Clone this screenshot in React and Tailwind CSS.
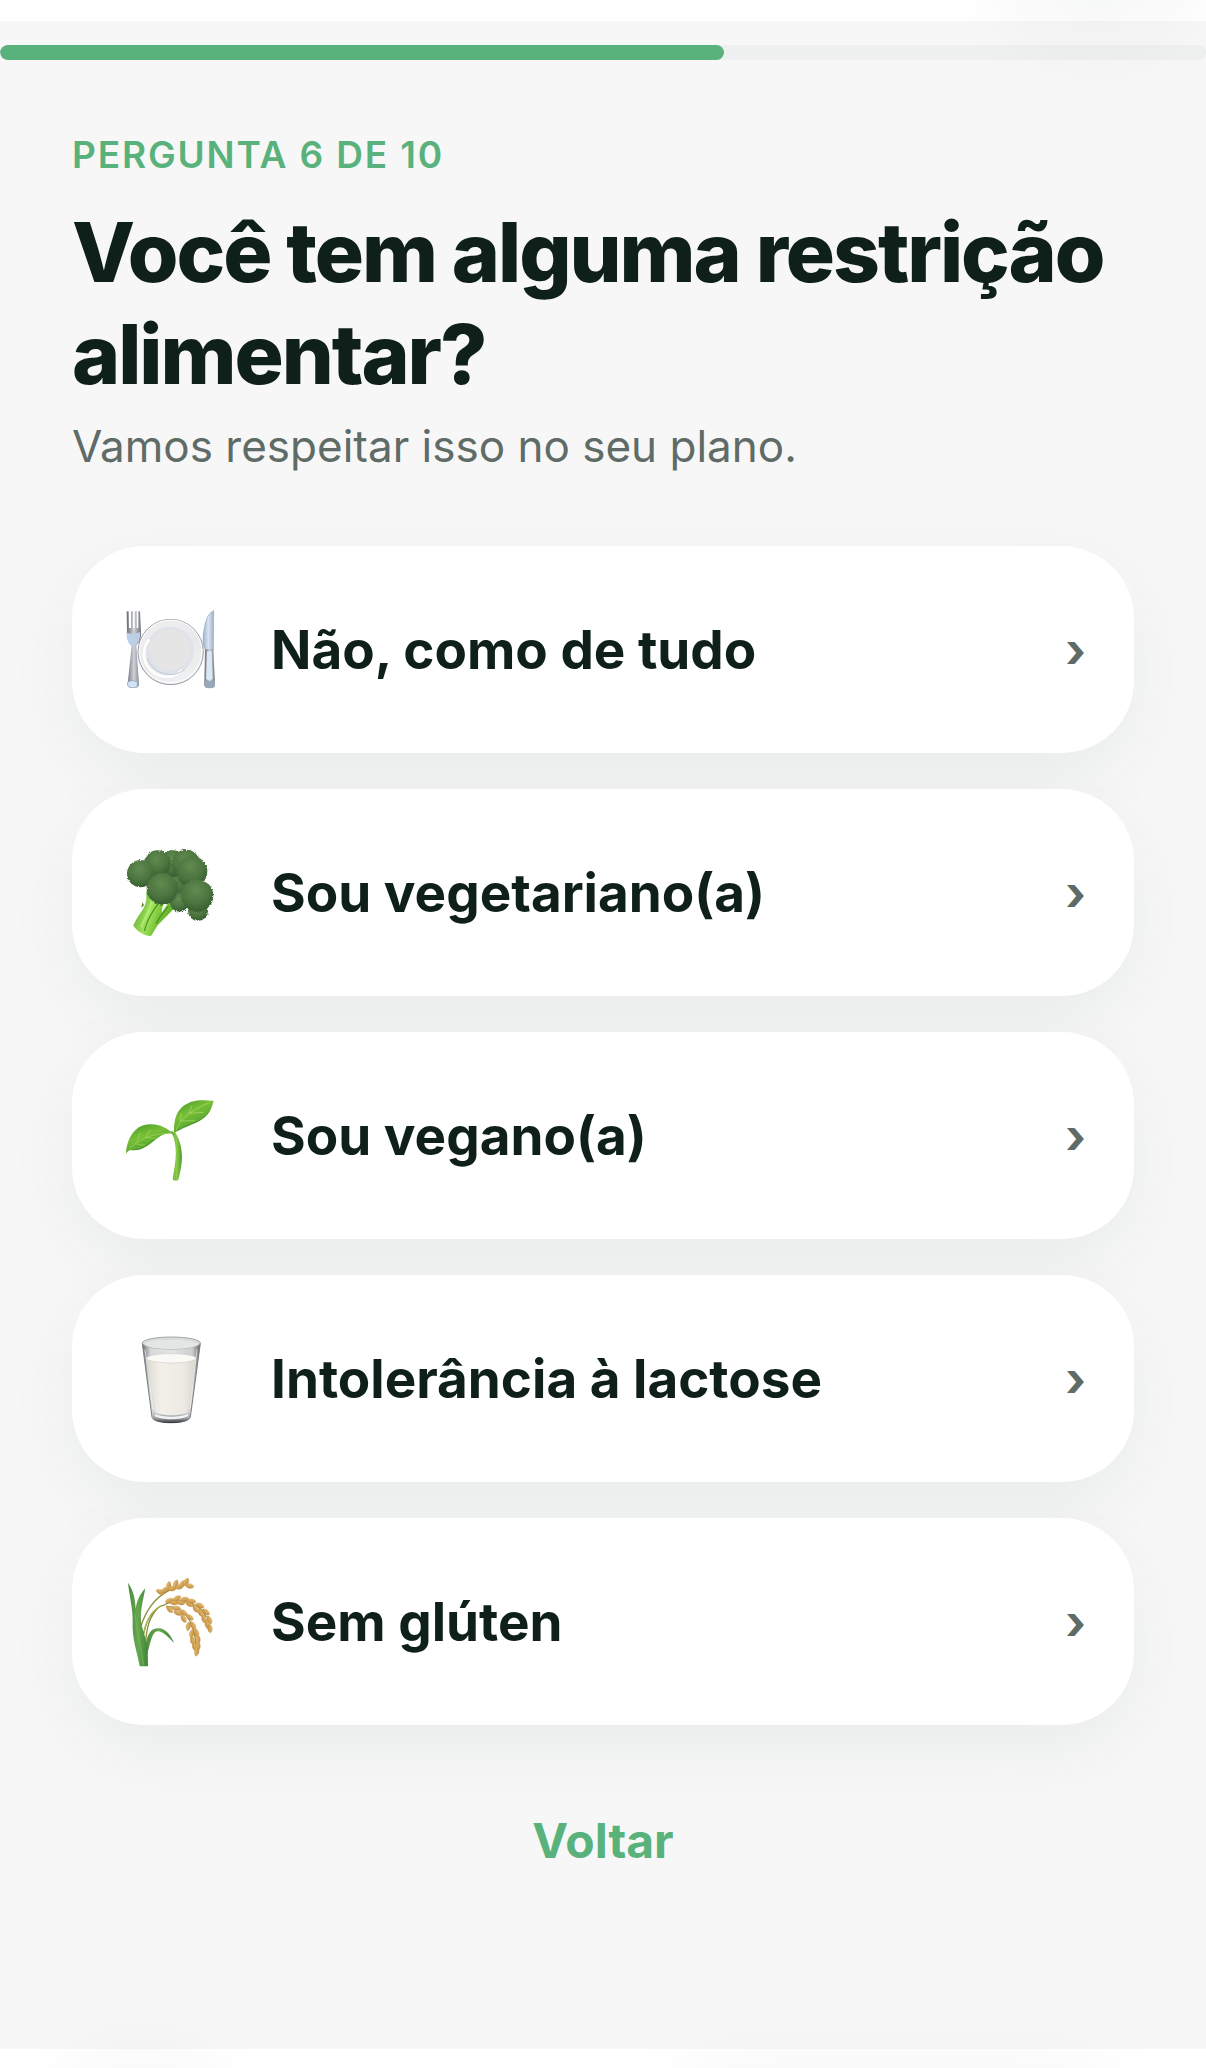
import { useState } from 'react'

const TOTAL = 10

const PlateIcon = () => (
  <svg viewBox="45 45 270 270" className="size-[90px] shrink-0" aria-hidden="true">
    <defs>
      <linearGradient id="steel" x1="0" x2="1">
        <stop offset="0" stopColor="#666b73" />
        <stop offset="0.5" stopColor="#cfd2d7" />
        <stop offset="1" stopColor="#6f747c" />
      </linearGradient>
      <linearGradient id="blade" x1="0" x2="1">
        <stop offset="0" stopColor="#9db2ca" />
        <stop offset="0.5" stopColor="#d9e4f2" />
        <stop offset="1" stopColor="#9fb3ca" />
      </linearGradient>
      <linearGradient id="rim" x1="0" y1="0" x2="0.6" y2="1">
        <stop offset="0" stopColor="#f1f1f2" />
        <stop offset="0.6" stopColor="#e8e8ea" />
        <stop offset="1" stopColor="#eff0f2" />
      </linearGradient>
    </defs>
    <circle cx="182" cy="186" r="98" fill="url(#rim)" stroke="#979ba4" strokeWidth="3" />
    <circle cx="182" cy="184" r="94" fill="none" stroke="#fff" strokeWidth="3" />
    <circle cx="180" cy="182" r="72" fill="#dfe3e9" />
    <path d="M118 148a68 68 0 0 0 100 92" fill="none" stroke="#fff" strokeWidth="8" opacity=".9" />
    <path d="M112 205a72 72 0 0 0 112 34" fill="none" stroke="#b9c6d9" strokeWidth="3" />
    <circle cx="180" cy="180" r="61" fill="#e5e5e5" />
    {/* fork */}
    <path d="M50 64h6l1 50h6V64h6v50h5V64h6v50h5V64h5l3 62c1 17-3 30-14 40l8 116c0 9-5 12-17 12s-17-3-17-12l12-116c-10-8-15-22-14-40z" fill="url(#steel)" />
    <path d="M49 126c10 8 31 6 41 0 1 20-4 32-14 39l-9 4c-9-5-17-14-18-43z" fill="#bccfe8" />
    <path d="M53 276q14-8 29 0v9q0 8-14 8t-15-8z" fill="#d4e4f8" stroke="#8e9fb6" strokeWidth="2" />
    {/* knife */}
    <path d="M311 62c-18 7-27 35-31 72-2 22 0 37 6 45h24z" fill="url(#blade)" stroke="#94a6bc" strokeWidth="2" />
    <path d="M285 178h25l5 105c0 8-4 12-16 12s-16-4-16-12z" fill="url(#steel)" />
    <path d="M291 184h14l3 83q-10 8-20 0z" fill="#dce7f5" />
    <path d="M284 270q14 8 30 0l1 15q-1 9-16 9t-16-9z" fill="#98a8bc" />
  </svg>
)

const florets = [
  [205, 130, 66],
  [264, 234, 30],
  [188, 92, 40],
  [228, 92, 42],
  [142, 92, 40],
  [92, 122, 41],
  [246, 116, 46],
  [208, 208, 28],
  [262, 188, 48],
  [157, 168, 47],
]

const BroccoliIcon = () => (
  <svg viewBox="45 45 270 270" className="size-[90px] shrink-0" aria-hidden="true">
    <defs>
      <radialGradient id="floret" cx=".45" cy=".32" r=".72">
        <stop offset="0" stopColor="#628b50" />
        <stop offset="0.6" stopColor="#4b743f" />
        <stop offset="1" stopColor="#34592d" />
      </radialGradient>
      <linearGradient id="stalk" x1="0" y1=".2" x2="1" y2=".6">
        <stop offset="0" stopColor="#55a025" />
        <stop offset="0.45" stopColor="#a2e25d" />
        <stop offset="0.7" stopColor="#72bf35" />
        <stop offset="1" stopColor="#63ac2c" />
      </linearGradient>
      <filter id="fuzz" x="-5%" y="-5%" width="110%" height="110%" colorInterpolationFilters="sRGB">
        <feTurbulence type="fractalNoise" baseFrequency="0.25" numOctaves="2" seed="4" />
        <feDisplacementMap in="SourceGraphic" scale="9" xChannelSelector="R" yChannelSelector="G" />
      </filter>
    </defs>
    <path d="M108 176c4 24-2 44-13 58-10 15-19 29-25 44 12 17 32 31 53 31l20-32 48-49-8-26z" fill="url(#stalk)" />
    <path d="M143 214c-18 24-33 50-40 80M174 220c-14 20-25 30-36 52" fill="none" stroke="#4d9721" strokeWidth="4" />
    <path d="M125 205c-8 30-19 50-32 77" fill="none" stroke="#b9ef7b" strokeWidth="7" opacity=".7" />
    <path d="M173 213l-18 26q1-21 9-28z" fill="#f8fff0" />
    <path d="M97 208l-3 16 8-7z" fill="#607d2d" />
    <g filter="url(#fuzz)">
      {florets.map(([cx, cy, r]) => (
        <circle key={`${cx}-${cy}`} cx={cx} cy={cy} r={r} fill="url(#floret)" />
      ))}
    </g>
  </svg>
)

const SproutIcon = () => (
  <svg viewBox="45 32 270 270" className="size-[90px] shrink-0" aria-hidden="true">
    <defs>
      <linearGradient id="leaf" x1="0" y1="0" x2=".6" y2="1">
        <stop offset="0" stopColor="#45962a" />
        <stop offset="0.45" stopColor="#78bf36" />
        <stop offset="1" stopColor="#44982c" />
      </linearGradient>
      <linearGradient id="stem" x1="0" x2="1">
        <stop offset="0" stopColor="#66ae35" />
        <stop offset="0.5" stopColor="#8bca4a" />
        <stop offset="1" stopColor="#4d9a2b" />
      </linearGradient>
    </defs>
    <path d="M184 151l13 7c12 20 19 45 19 74-1 25-6 47-11 66-4 5-14 4-17-1 7-42 13-75 7-109-3-15-5-22-11-29z" fill="url(#stem)" />
    <path d="M48 221c0-36 18-73 48-85 37-12 70 1 94 24-28-3-40 7-58 22-27 23-45 29-67 27-8 0-13 4-17 12z" fill="url(#leaf)" />
    <path d="M192 159c-1-29 3-59 22-77 25-24 60-25 97-20-4 10-5 20-11 30-24 39-71 41-108 67z" fill="url(#leaf)" />
    <path d="M60 204c27-27 58-43 122-46M80 187l11-31M106 171l16-24M74 190l31 5M105 171l32 4" fill="none" stroke="#a9d965" strokeWidth="3" opacity=".6" />
    <path d="M198 150c13-34 43-60 100-83M212 122l1-25M238 98l7-23M213 122l42-1M238 99l43-3" fill="none" stroke="#b0df76" strokeWidth="3" opacity=".6" />
    <path d="M65 209c31 1 45-14 67-34M202 151c28-20 69-21 94-55" fill="none" stroke="#2f7c26" strokeWidth="3" opacity=".5" />
  </svg>
)

const MilkIcon = () => (
  <svg viewBox="45 41 270 270" className="size-[90px] shrink-0" aria-hidden="true">
    <defs>
      <linearGradient id="glass" x1="0" x2="1">
        <stop offset="0" stopColor="#6d7073" />
        <stop offset="0.14" stopColor="#d6d7d8" />
        <stop offset="0.5" stopColor="#e2e3e3" />
        <stop offset="0.86" stopColor="#cdcecf" />
        <stop offset="1" stopColor="#63666a" />
      </linearGradient>
      <linearGradient id="milk" x1="0" x2="1">
        <stop offset="0" stopColor="#dddcd3" />
        <stop offset="0.3" stopColor="#f2f0e9" />
        <stop offset="0.75" stopColor="#eceae2" />
        <stop offset="1" stopColor="#d8d6cd" />
      </linearGradient>
      <linearGradient id="base" x1="0" y1="0" x2="0" y2="1">
        <stop offset="0" stopColor="#d8d9da" />
        <stop offset="0.6" stopColor="#a0a2a4" />
        <stop offset="1" stopColor="#303335" />
      </linearGradient>
    </defs>
    <path d="M97 69l29 221c2 23 112 23 115 0l30-221z" fill="url(#glass)" stroke="#7a7d80" strokeWidth="3" />
    <ellipse cx="184" cy="68" rx="87" ry="18" fill="#d9dada" stroke="#a2a5a7" strokeWidth="3" />
    <ellipse cx="184" cy="72" rx="80" ry="14" fill="#e4e5e5" />
    <path d="M110 114l25 159c6 14 96 14 101 0l22-159z" fill="url(#milk)" />
    <ellipse cx="184" cy="114" rx="74" ry="14" fill="#faf9f6" stroke="#d0cfc9" strokeWidth="2" />
    <path d="M127 271c11 18 103 18 114 0l-2 22c-5 20-107 20-111 0z" fill="url(#base)" />
    <path d="M134 280c22 12 79 12 101 0l-1 8c-23 12-77 12-99 0z" fill="#f2f3f3" />
    <path d="M105 88l24 178M261 88l-21 178" fill="none" stroke="#fff" strokeWidth="3" opacity=".6" />
  </svg>
)

// x, y, rotation of each grain
const grains = [
  [151, 80, 115], [165, 74, 60], [176, 61, 10], [187, 70, 80], [197, 56, 20],
  [208, 65, 80], [218, 55, 45], [228, 50, 30], [239, 62, 100],
  [179, 106, 75], [193, 112, 90], [201, 99, 60], [212, 112, 100], [224, 102, 85],
  [238, 116, 120], [245, 108, 95], [257, 130, 150], [270, 121, 115], [272, 142, 160],
  [288, 140, 130], [282, 161, 165], [298, 164, 155], [292, 178, 170], [300, 190, 175],
  [179, 132, 140], [199, 129, 90], [204, 143, 110], [221, 142, 125], [221, 160, 150],
  [239, 156, 125], [235, 183, 10], [250, 182, 155], [245, 205, 10], [260, 204, 165],
  [248, 226, 170], [264, 224, 5], [254, 244, 165], [264, 244, 10], [260, 259, 10],
]

const RiceIcon = () => (
  <svg viewBox="45 35 270 270" className="size-[90px] shrink-0" aria-hidden="true">
    <defs>
      <linearGradient id="blades" x1="0" x2="1">
        <stop offset="0" stopColor="#4a8c3d" />
        <stop offset="0.5" stopColor="#66a84e" />
        <stop offset="1" stopColor="#41833a" />
      </linearGradient>
      <linearGradient id="grain" x1="0" x2="1">
        <stop offset="0" stopColor="#e6bd72" />
        <stop offset="1" stopColor="#c48f42" />
      </linearGradient>
    </defs>
    <path d="M92 185c16-50 40-88 91-113M98 220c10-55 26-90 69-103M106 244c3-60 13-90 37-115M166 116c35-16 96-14 123 39M168 124c50-3 81 30 91 117" fill="none" stroke="#8b8b38" strokeWidth="4" />
    <path d="M98 225c6-58 25-88 56-104" fill="none" stroke="#a3b75a" strokeWidth="4" />
    {/* drooping blade, then the upright ones */}
    <path d="M104 270c4-44 8-76 36-81 27-4 44 23 52 44-16-17-35-37-51-35-18 5-20 42-31 72z" fill="url(#blades)" />
    <path d="M54 52c18 27 22 50 23 79 3-27 14-46 29-62-7 37-15 64-13 97 4 29 16 53 20 84l1 53H89c-8-45-24-86-21-137 0-40-10-74-14-114z" fill="url(#blades)" />
    <path d="M76 145c4 54 15 93 25 155" fill="none" stroke="#7fbd64" strokeWidth="4" opacity=".5" />
    {grains.map(([x, y, a]) => (
      <path
        key={`${x}-${y}`}
        d="M0-13C8-8 10 5 0 14-10 5-8-8 0-13z"
        transform={`translate(${x} ${y}) rotate(${a})`}
        fill="url(#grain)"
        stroke="#b98436"
        strokeWidth="1"
      />
    ))}
  </svg>
)

const options = [
  { id: 'tudo', label: 'Não, como de tudo', Icon: PlateIcon },
  { id: 'vegetariano', label: 'Sou vegetariano(a)', Icon: BroccoliIcon },
  { id: 'vegano', label: 'Sou vegano(a)', Icon: SproutIcon },
  { id: 'lactose', label: 'Intolerância à lactose', Icon: MilkIcon },
  { id: 'gluten', label: 'Sem glúten', Icon: RiceIcon },
]

export default function App() {
  const [step] = useState(6)
  const [, setAnswer] = useState(null)

  return (
    <div className="relative min-h-screen overflow-hidden bg-white flex flex-col pt-[21px] pb-[19px] font-['Inter','Liberation_Sans',sans-serif]">
      <main className="flex-1 bg-[#f7f7f7] pt-6">
        <div className="h-[15px] rounded-full bg-[#eef1f0] overflow-hidden">
          <div className="h-full rounded-full bg-[#59b17c]" style={{ width: `${(step / TOTAL) * 100}%` }} />
        </div>

        <div className="px-[72px] pt-[68px]">
          <p className="text-[37px] leading-[54px] font-semibold tracking-wider uppercase text-[#59b17c]">
            Pergunta {step} de {TOTAL}
          </p>
          <h1 className="mt-5 text-[82px] leading-[102px] font-extrabold tracking-tight text-[#0f1f1a]">
            Você tem alguma restrição alimentar?
          </h1>
          <p className="mt-1 text-[44px] leading-[72px] text-[#5f6b66]">
            Vamos respeitar isso no seu plano.
          </p>

          <div className="mt-16 flex flex-col gap-9">
            {options.map(({ id, label, Icon }) => (
              <button
                key={id}
                type="button"
                onClick={() => setAnswer(id)}
                className="flex items-center gap-14 h-[207px] pl-[53px] pr-12 rounded-[72px] bg-white text-left shadow-[0_24px_72px_rgba(15,61,50,0.06)]"
              >
                <Icon />
                <span className="flex-1 text-[53px] leading-[72px] font-bold text-[#0f1f1a]">{label}</span>
                <span className="text-[48px] leading-[72px] font-bold text-[#5f6b66]" aria-hidden="true">›</span>
              </button>
            ))}
          </div>

          <div className="mt-20 flex justify-center">
            <button type="button" className="px-9 text-[48px] leading-[72px] font-bold text-[#59b17c]">
              Voltar
            </button>
          </div>
        </div>
      </main>

      {/* soft shadows of the floating bars above and below the page */}
      <div className="pointer-events-none absolute -top-[132px] right-[43px] size-[132px] rounded-full shadow-[0_12px_110px_20px_rgba(15,50,42,0.06)]" />
      <div className="pointer-events-none absolute -bottom-[132px] left-[76px] size-[132px] rounded-full shadow-[0_0_90px_10px_rgba(15,50,42,0.05)]" />
      <div className="pointer-events-none absolute -bottom-[132px] right-[82px] w-[456px] h-[132px] rounded-full shadow-[0_0_90px_rgba(15,50,42,0.04)]" />
    </div>
  )
}
